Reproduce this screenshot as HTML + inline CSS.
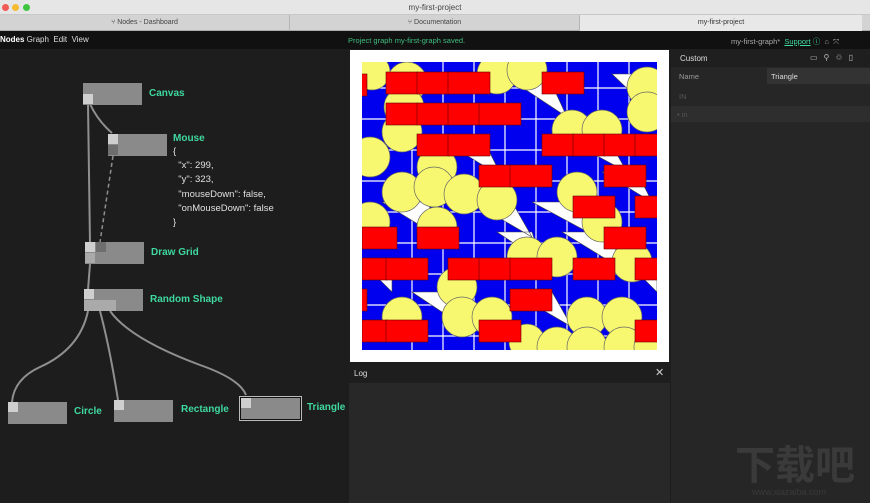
<!DOCTYPE html>
<html><head><meta charset="utf-8"><style>
*{margin:0;padding:0;box-sizing:border-box}
body{width:870px;height:503px;overflow:hidden;background:#1d1d1d;font-family:"Liberation Sans",sans-serif;position:relative}
.abs{position:absolute}
.node{position:absolute;background:#8a8a8a;height:22px;width:59px}
.port{position:absolute;width:10px;height:10px;background:#cfcfcf}
.lbl{position:absolute;color:#3fd9a0;font-weight:bold;font-size:10px}
</style></head><body>
<!-- title bar -->
<div class="abs" style="left:0;top:0;width:870px;height:15px;background:#e6e6e6;border-bottom:1px solid #c8c8c8"></div>
<div class="abs" style="left:2px;top:4px;width:7px;height:7px;border-radius:50%;background:#f25a55"></div>
<div class="abs" style="left:12px;top:4px;width:7px;height:7px;border-radius:50%;background:#f6bb31"></div>
<div class="abs" style="left:23px;top:4px;width:7px;height:7px;border-radius:50%;background:#3ec53f"></div>
<div class="abs" style="left:0;top:3px;width:870px;text-align:center;font-size:8px;color:#444">my-first-project</div>
<!-- tabs -->
<div class="abs" style="left:0;top:15px;width:870px;height:16px;background:#d3d3d3;border-bottom:1px solid #aaa"></div>
<div class="abs" style="left:0;top:15px;width:290px;height:16px;border-right:1px solid #b5b5b5;text-align:center;font-size:7px;line-height:16px;color:#444">⑂ Nodes - Dashboard</div>
<div class="abs" style="left:290px;top:15px;width:290px;height:16px;border-right:1px solid #b5b5b5;text-align:center;font-size:7px;line-height:16px;color:#444">⑂ Documentation</div>
<div class="abs" style="left:580px;top:15px;width:282px;height:16px;background:#e8e8e8;text-align:center;font-size:7px;line-height:16px;color:#333">my-first-project</div>
<!-- menu -->
<div class="abs" style="left:0;top:31px;width:870px;height:18px;background:#111"></div>
<div class="abs" style="left:0;top:35px;font-size:8px;color:#ddd"><b style="color:#fff">Nodes</b> Graph &nbsp;Edit &nbsp;View</div>
<div class="abs" style="left:348px;top:36px;font-size:7.5px;color:#3fbf80">Project graph my-first-graph saved.</div>
<div class="abs" style="left:731px;top:36px;font-size:7.5px;color:#aaa">my-first-graph* &nbsp;<span style="color:#3fd9a0;text-decoration:underline">Support</span> <span style="color:#3fd9a0">ⓘ</span> &nbsp;⌂ &nbsp;⤧</div>
<!-- graph wires -->
<svg class="abs" style="left:0;top:49px" width="349" height="454">
<g fill="none" stroke="#8f8f8f" stroke-width="2">
<path d="M88 55 L90 195"/>
<path d="M90 55 Q98 72 112 84"/>
<path d="M113 107 L100 193" stroke-dasharray="4 3" stroke-width="1.5"/>
<path d="M90 215 L88 241"/>
<path d="M88 262 Q80 300 40 318 Q14 330 12 353"/>
<path d="M100 262 Q110 300 118 351"/>
<path d="M110 262 Q130 290 200 316 Q240 330 246 346"/>
</g></svg>
<!-- nodes -->
<div class="node" style="left:83px;top:83px"></div><div class="port" style="left:83px;top:94px"></div>
<div class="lbl" style="left:149px;top:88px">Canvas</div>
<div class="node" style="left:108px;top:134px"></div><div class="port" style="left:108px;top:134px"></div><div class="port" style="left:108px;top:145px;background:#6e6e6e"></div>
<div class="lbl" style="left:173px;top:133px">Mouse</div>
<div class="abs" style="left:173px;top:145px;font-size:9.5px;line-height:14.2px;color:#e0e0e0;white-space:pre">{
  "x": 299,
  "y": 323,
  "mouseDown": false,
  "onMouseDown": false
}</div>
<div class="node" style="left:85px;top:242px"></div><div class="port" style="left:85px;top:242px"></div><div class="port" style="left:96px;top:242px;background:#6e6e6e"></div><div class="port" style="left:85px;top:253px;background:#aaa"></div>
<div class="lbl" style="left:151px;top:247px">Draw Grid</div>
<div class="node" style="left:84px;top:289px"></div><div class="port" style="left:84px;top:289px"></div><div class="abs" style="left:84px;top:300px;width:32px;height:11px;background:#aaa"></div>
<div class="lbl" style="left:150px;top:294px">Random Shape</div>
<div class="node" style="left:8px;top:402px"></div><div class="port" style="left:8px;top:402px"></div>
<div class="lbl" style="left:74px;top:406px">Circle</div>
<div class="node" style="left:114px;top:400px"></div><div class="port" style="left:114px;top:400px"></div>
<div class="lbl" style="left:181px;top:404px">Rectangle</div>
<div class="abs" style="left:239px;top:396px;width:63px;height:25px;border:1px solid #bbb;background:#111"></div>
<div class="node" style="left:241px;top:398px;width:59px;height:21px"></div><div class="port" style="left:241px;top:398px"></div>
<div class="lbl" style="left:307px;top:402px">Triangle</div>
<!-- canvas -->
<div class="abs" style="left:350px;top:50px;width:319px;height:312px;background:#fff"></div>
<svg class="abs" style="left:362px;top:62px" width="295" height="288" viewBox="0 0 295 288">
<defs><clipPath id="c"><rect width="295" height="288"/></clipPath></defs>
<g clip-path="url(#c)">
<rect width="295" height="288" fill="#0000ee"/>
<g stroke="#fff" stroke-width="1.2">
<path d="M50 0V288M81 0V288M112 0V288M143 0V288M174 0V288M205 0V288M236 0V288M267 0V288M0 26H295M0 57H295M0 88H295M0 119H295M0 150H295M0 181H295M0 212H295M0 243H295M0 274H295"/></g>
<g fill="#fff" stroke="#444" stroke-width=".6">
<path d="M140 12L185 12L205 55ZM75 75L120 75L140 115ZM250 12L290 12L295 55ZM200 75L245 75L265 110ZM20 140L65 140L85 180ZM110 140L150 140L170 175ZM170 140L215 140L235 175ZM135 170L170 170L180 200ZM200 170L245 170L265 210ZM265 200L295 200L295 230ZM50 230L90 230L110 270ZM150 230L190 230L210 265ZM0 200L30 200L30 230ZM240 110L275 110L290 140Z"/></g>
<g fill="#f8f870" stroke="#666" stroke-width=".7">
<circle cx="10" cy="10" r="18"/><circle cx="45" cy="20" r="20"/><circle cx="135" cy="12" r="20"/><circle cx="165" cy="8" r="20"/><circle cx="285" cy="25" r="20"/><circle cx="285" cy="50" r="20"/>
<circle cx="42" cy="45" r="20"/><circle cx="40" cy="70" r="20"/><circle cx="210" cy="68" r="20"/><circle cx="240" cy="68" r="20"/>
<circle cx="8" cy="95" r="20"/><circle cx="75" cy="105" r="20"/><circle cx="40" cy="130" r="20"/><circle cx="72" cy="125" r="20"/><circle cx="102" cy="132" r="20"/><circle cx="135" cy="138" r="20"/><circle cx="215" cy="130" r="20"/>
<circle cx="8" cy="160" r="20"/><circle cx="75" cy="165" r="20"/><circle cx="240" cy="160" r="20"/><circle cx="165" cy="195" r="20"/><circle cx="195" cy="195" r="20"/><circle cx="270" cy="200" r="20"/>
<circle cx="95" cy="225" r="20"/><circle cx="40" cy="255" r="20"/><circle cx="100" cy="255" r="20"/><circle cx="130" cy="255" r="20"/><circle cx="225" cy="255" r="20"/><circle cx="260" cy="255" r="20"/>
<circle cx="165" cy="280" r="18"/><circle cx="195" cy="285" r="20"/><circle cx="225" cy="285" r="20"/><circle cx="262" cy="285" r="20"/><circle cx="290" cy="285" r="18"/>
</g>
<g fill="#f00" stroke="#600" stroke-width=".6">
<rect x="24" y="10" width="32" height="22"/><rect x="55" y="10" width="32" height="22"/><rect x="86" y="10" width="42" height="22"/><rect x="180" y="10" width="42" height="22"/><rect x="-5" y="12" width="10" height="22"/>
<rect x="24" y="41" width="32" height="22"/><rect x="55" y="41" width="32" height="22"/><rect x="86" y="41" width="32" height="22"/><rect x="117" y="41" width="42" height="22"/>
<rect x="55" y="72" width="32" height="22"/><rect x="86" y="72" width="42" height="22"/><rect x="180" y="72" width="32" height="22"/><rect x="211" y="72" width="32" height="22"/><rect x="242" y="72" width="32" height="22"/><rect x="273" y="72" width="30" height="22"/>
<rect x="117" y="103" width="32" height="22"/><rect x="148" y="103" width="42" height="22"/><rect x="242" y="103" width="42" height="22"/>
<rect x="211" y="134" width="42" height="22"/><rect x="273" y="134" width="30" height="22"/>
<rect x="0" y="165" width="35" height="22"/><rect x="55" y="165" width="42" height="22"/><rect x="242" y="165" width="42" height="22"/>
<rect x="0" y="196" width="25" height="22"/><rect x="24" y="196" width="42" height="22"/><rect x="86" y="196" width="32" height="22"/><rect x="117" y="196" width="32" height="22"/><rect x="148" y="196" width="42" height="22"/><rect x="211" y="196" width="42" height="22"/><rect x="273" y="196" width="30" height="22"/>
<rect x="148" y="227" width="42" height="22"/><rect x="-5" y="227" width="10" height="22"/>
<rect x="0" y="258" width="25" height="22"/><rect x="24" y="258" width="42" height="22"/><rect x="117" y="258" width="42" height="22"/><rect x="273" y="258" width="30" height="22"/>
</g></g></svg>
<!-- log -->
<div class="abs" style="left:349px;top:365px;width:321px;height:18px;background:#1e1e1e"></div>
<div class="abs" style="left:354px;top:369px;font-size:8px;color:#ddd">Log</div>
<div class="abs" style="left:655px;top:366px;font-size:11px;color:#ccc">✕</div>
<div class="abs" style="left:349px;top:383px;width:321px;height:120px;background:#282828"></div>
<!-- right panel -->
<div class="abs" style="left:671px;top:49px;width:199px;height:454px;background:#262626"></div>
<div class="abs" style="left:671px;top:49px;width:199px;height:18px;background:#1f1f1f"></div>
<div class="abs" style="left:680px;top:54px;font-size:8px;color:#ddd">Custom</div>
<div class="abs" style="left:810px;top:53px;font-size:8px;color:#bbb;letter-spacing:6px">▭⚲♲▯</div>
<div class="abs" style="left:679px;top:72px;font-size:7.5px;color:#999">Name</div>
<div class="abs" style="left:767px;top:68px;width:103px;height:16px;background:#333"></div>
<div class="abs" style="left:771px;top:72px;font-size:7.5px;color:#ddd">Triangle</div>
<div class="abs" style="left:679px;top:92px;font-size:7.5px;color:#555">IN</div>
<div class="abs" style="left:671px;top:106px;width:199px;height:16px;background:#2e2e2e"></div>
<div class="abs" style="left:677px;top:110px;font-size:7.5px;color:#555">• in</div>
<div class="abs" style="left:735px;top:440px;font-size:40px;font-weight:bold;color:#3a3a3a;font-family:'Noto Sans CJK SC',sans-serif;line-height:45px">下载吧</div>
<div class="abs" style="left:752px;top:487px;font-size:9px;color:#3a3a3a">www.xiazaiba.com</div>
</body></html>
